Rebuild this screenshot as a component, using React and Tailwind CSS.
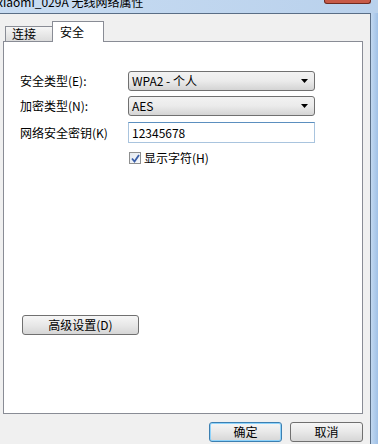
import React from 'react';

const font = { fontFamily: '"SimSun", "Noto Sans CJK SC", "Liberation Sans", sans-serif' };

function Select({ value }) {
  return (
    <div className="flex items-center justify-between w-[187px] h-[20px] border border-[#707070] rounded-[3px] bg-gradient-to-b from-[#f2f2f2] via-[#ebebeb] to-[#d4d4d4] pl-[3px] pr-[6px]">
      <span className="text-[12px] leading-none text-black">{value}</span>
      <svg width="7" height="4" viewBox="0 0 7 4"><path d="M0 0h7L3.5 4z" fill="#000" /></svg>
    </div>
  );
}

function Button({ children, focused, className = '' }) {
  return (
    <div
      className={`flex items-center justify-center h-[20px] rounded-[3px] border text-[12px] leading-none text-black bg-gradient-to-b from-[#f6f6f6] via-[#e8e8e8] to-[#d6d6d6] ${
        focused ? 'border-[#3c7fb1] shadow-[inset_0_0_0_1px_#8ed3fb]' : 'border-[#707070]'
      } ${className}`}
    >
      {children}
    </div>
  );
}

export default function App() {
  return (
    <div className="w-[378px] h-[444px] bg-gradient-to-r from-[#c8dcf2] to-[#b9d1ec] overflow-hidden relative" style={font}>
      {/* title bar */}
      <div className="h-[13px] overflow-hidden">
        <div className="-mt-[4px] -ml-[3px] text-[12px] leading-[12px] text-black whitespace-nowrap">xiaomi_029A 无线网络属性</div>
      </div>
      <div className="absolute top-0 left-[324px] w-[47px] h-[4px] bg-[#c75a47] border border-t-0 border-[#6e2a20] rounded-b-[3px]" />

      <div className="flex">
        {/* client area */}
        <div className="w-[371px] h-[431px] bg-[#f0f0f0] border-t border-r border-[#5a6e86] flex flex-col">
          {/* tabs */}
          <div className="flex items-end h-[27px] pl-[5px]">
            <div className="w-[48px] h-[15px] border border-b-0 border-[#898c95] bg-gradient-to-b from-[#f6f6f6] to-[#dcdcdc] flex items-center pl-[6px] text-[12px] leading-none text-black">
              连接
            </div>
            <div className="-ml-[1px] w-[52px] h-[21px] border border-b-0 border-[#898c95] bg-white flex items-start pt-[4px] pl-[7px] text-[12px] leading-none text-black relative top-[1px] z-10">
              安全
            </div>
          </div>

          {/* panel */}
          <div className="ml-[3px] w-[360px] h-[373px] bg-white border border-[#898c95] flex flex-col">
            <div className="pt-[29px] pl-[16px] flex flex-col">
              <div className="flex items-center h-[20px]">
                <span className="w-[108px] text-[12px] leading-none text-black">安全类型(E):</span>
                <Select value="WPA2 - 个人" />
              </div>
              <div className="flex items-center h-[20px] mt-[5px]">
                <span className="w-[108px] text-[12px] leading-none text-black">加密类型(N):</span>
                <Select value="AES" />
              </div>
              <div className="flex items-center h-[21px] mt-[6px]">
                <span className="w-[108px] text-[12px] leading-none text-black">网络安全密钥(K)</span>
                <div className="w-[187px] h-[21px] border border-[#a9c4de] border-t-[#5b8fbf] bg-white flex items-center pl-[3px] text-[12px] leading-none text-black">
                  12345678
                </div>
              </div>
              <div className="flex items-center mt-[9px] ml-[109px] h-[12px]">
                <div className="w-[12px] h-[12px] border border-[#8e8f8f] bg-gradient-to-br from-[#e4e9ef] to-[#f7f9fb] flex items-center justify-center">
                  <svg width="9" height="9" viewBox="0 0 9 9">
                    <path d="M1 4.5L3.5 7.5L8 1" stroke="#3a5ea8" strokeWidth="1.8" fill="none" />
                  </svg>
                </div>
                <span className="ml-[3px] text-[12px] leading-none text-black">显示字符(H)</span>
              </div>
            </div>
            <div className="mt-auto mb-[78px] ml-[18px]">
              <Button className="w-[117px]">高级设置(D)</Button>
            </div>
          </div>

          {/* dialog buttons */}
          <div className="flex mt-[8px] pl-[209px] gap-[8px]">
            <Button focused className="w-[73px]">确定</Button>
            <Button className="w-[73px]">取消</Button>
          </div>
        </div>
        <div className="flex-1 bg-gradient-to-r from-[#c2d8f0] to-[#9fc0e6]" />
      </div>
    </div>
  );
}
